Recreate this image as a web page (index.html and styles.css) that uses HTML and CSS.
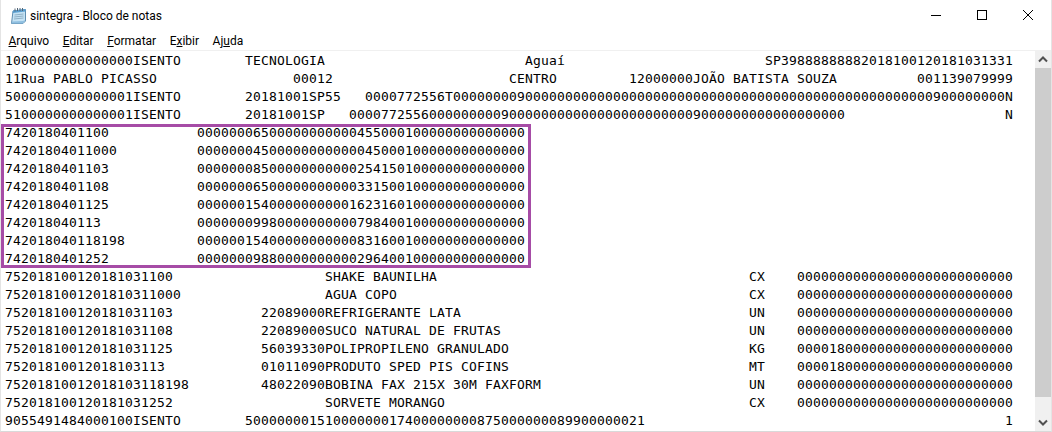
FILE: index.html
```html
<!DOCTYPE html>
<html lang="pt-BR">
<head>
<meta charset="utf-8">
<title>sintegra - Bloco de notas</title>
<link rel="stylesheet" href="styles.css">
</head>
<body>
<div class="window">
  <header class="titlebar">
    <svg class="app-icon" width="18" height="18" viewBox="0 0 18 18">
      <path d="M3 4 L15.5 2.5 L15.5 14 L13 16.5 L1.5 16.5 Z" fill="#c4e2f4" stroke="#5e8db0"/>
      <path d="M2 14.5 L13 14 L15.5 13 L13 16.5 L1.5 16.5 Z" fill="#8fbfe0"/>
      <path d="M3 3.5 L15.5 2 L15.5 4.5 L2.8 6 Z" fill="#5a9fd0"/>
      <path d="M4.5 8 L13.5 7 M4.2 10 L13.5 9 M4 12 L13.5 11" stroke="#8fb0c6" stroke-width="1"/>
      <path d="M5 1.5 V4.5 M7.5 1 V4 M10 1 V4 M12.5 1 V4" stroke="#556676" stroke-width="1"/>
    </svg>
    <span class="title">sintegra - Bloco de notas</span>
    <div class="controls">
      <svg class="ctl" width="46" height="30" viewBox="0 0 46 30"><path d="M17 15.5 H27" stroke="#000" stroke-width="1"/></svg>
      <svg class="ctl" width="46" height="30" viewBox="0 0 46 30"><rect x="17.5" y="10.5" width="9" height="9" fill="none" stroke="#000"/></svg>
      <svg class="ctl" width="46" height="30" viewBox="0 0 46 30"><path d="M17 10 L27 20 M27 10 L17 20" stroke="#000" stroke-width="1"/></svg>
    </div>
  </header>
  <nav class="menubar">
    <span class="menu-item"><u>A</u>rquivo</span>
    <span class="menu-item"><u>E</u>ditar</span>
    <span class="menu-item"><u>F</u>ormatar</span>
    <span class="menu-item">E<u>x</u>ibir</span>
    <span class="menu-item">Aj<u>u</u>da</span>
  </nav>
  <main class="editor">
    <div class="text">
<pre class="lines">1000000000000000ISENTO        TECNOLOGIA                         Aguaí                         SP39888888882018100120181031331
11Rua PABLO PICASSO                 00012                      CENTRO         12000000JOÃO BATISTA SOUZA          001139079999
5000000000000001ISENTO        20181001SP55   0000772556T000000009000000000000000000000000000000000000000000000000000900000000N
5100000000000001ISENTO        20181001SP   00007725560000000009000000000000000000000009000000000000000000                    N</pre>
<pre class="lines marked">7420180401100           00000006500000000000455000100000000000000
74201804011000          00000004500000000000045000100000000000000
7420180401103           00000008500000000000254150100000000000000
7420180401108           00000006500000000000331500100000000000000
7420180401125           00000015400000000001623160100000000000000
742018040113            00000009980000000000798400100000000000000
742018040118198         00000015400000000000831600100000000000000
7420180401252           00000009880000000000296400100000000000000</pre>
<pre class="lines">752018100120181031100                   SHAKE BAUNILHA                                       CX    000000000000000000000000000
7520181001201810311000                  AGUA COPO                                            CX    000000000000000000000000000
752018100120181031103           22089000REFRIGERANTE LATA                                    UN    000000000000000000000000000
752018100120181031108           22089000SUCO NATURAL DE FRUTAS                               UN    000000000000000000000000000
752018100120181031125           56039330POLIPROPILENO GRANULADO                              KG    000018000000000000000000000
75201810012018103113            01011090PRODUTO SPED PIS COFINS                              MT    000018000000000000000000000
75201810012018103118198         48022090BOBINA FAX 215X 30M FAXFORM                          UN    000000000000000000000000000
752018100120181031252                   SORVETE MORANGO                                      CX    000000000000000000000000000
9055491484000100ISENTO        50000000151000000017400000000875000000089900000021                                             1</pre>
    </div>
    <div class="scrollbar">
      <svg class="arrow" width="16" height="17" viewBox="0 0 16 17"><path d="M4 10.5 L8 6.5 L12 10.5" fill="none" stroke="#505050" stroke-width="2"/></svg>
      <div class="track"><div class="thumb"></div></div>
      <svg class="arrow" width="16" height="17" viewBox="0 0 16 17"><path d="M4 6.5 L8 10.5 L12 6.5" fill="none" stroke="#505050" stroke-width="2"/></svg>
    </div>
  </main>
</div>
</body>
</html>
```
FILE: styles.css
```css
* { box-sizing: border-box; }
html, body { margin: 0; padding: 0; }
body { width: 1052px; height: 432px; overflow: hidden; background: #fff; }
.window {
  width: 1052px; height: 432px;
  display: flex; flex-direction: column;
  border-left: 1px solid #e4e4e4;
  border-right: 1px solid #e4e4e4;
  border-bottom: 1px solid #d9d9d9;
  font-family: Roboto, "Open Sans", sans-serif;
  color: #000;
}
.titlebar { height: 30px; flex: none; display: flex; align-items: center; padding-left: 9px; }
.app-icon { flex: none; margin-top: 1px; }
.title { margin: 2px 0 0 2px; font-size: 12px; color: #000; }
.controls { margin-left: auto; margin-right: -1px; display: flex; }
.ctl { display: block; flex: none; }
.menubar { height: 20px; flex: none; display: flex; align-items: center; padding: 2px 0 0 7.5px; gap: 13.5px; font-size: 12px; }
.menu-item { display: block; }
.editor { flex: 1; min-height: 0; display: flex; border-top: 1px solid #f0f0f0; }
.text { flex: 1; min-width: 0; overflow: hidden; padding: 1px 0 0 4px; }
.lines {
  margin: 0;
  font-family: "DejaVu Sans Mono", monospace;
  font-size: 13px;
  letter-spacing: 0.174px;
  line-height: 18px;
  white-space: pre;
  color: #000;
}
.marked {
  width: 530px;
  margin-left: -4px;
  padding-left: 4px;
  box-shadow: inset 0 0 0 3px #a64ca6;
}
.scrollbar { width: 16px; flex: none; display: flex; flex-direction: column; background: #f0f0f0; }
.arrow { display: block; flex: none; }
.track { flex: 1; min-height: 0; }
.thumb { height: 329px; background: #cdcdcd; }
```
